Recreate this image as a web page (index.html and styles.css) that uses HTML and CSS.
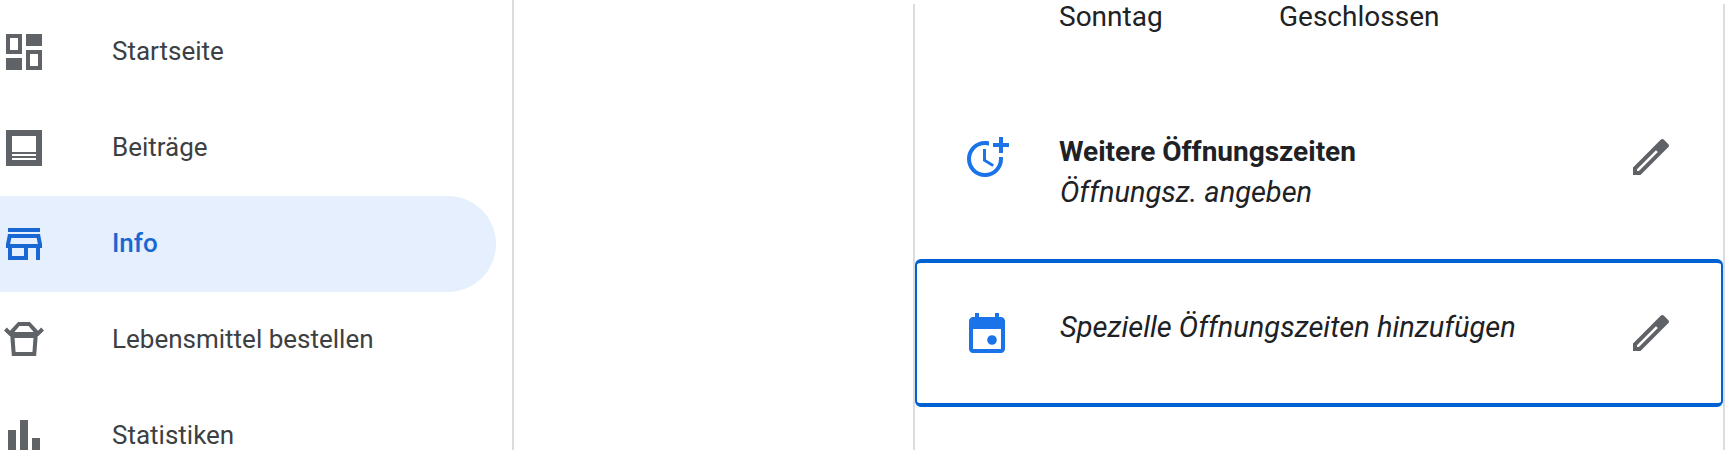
FILE: index.html
```html
<!DOCTYPE html>
<html lang="de">
<head>
<meta charset="utf-8">
<title>Info</title>
<link rel="stylesheet" href="styles.css">
</head>
<body>
<div class="page">
  <nav class="sidebar">
    <a class="nav-item">
      <svg class="icon" viewBox="0 0 24 24"><path fill-rule="evenodd" d="M3 3h8v10H3zM5 5v6h4V5zM13 3h8v6h-8zM13 11h8v10h-8zM15 13v6h4v-6zM3 15h8v6H3z"/></svg>
      <span>Startseite</span>
    </a>
    <a class="nav-item">
      <svg class="icon" viewBox="0 0 24 24"><path fill-rule="evenodd" d="M3 3h18v18H3zM6 6v8h12V6zM6 15v1h12v-1zM6 17v1h12v-1z"/></svg>
      <span>Beiträge</span>
    </a>
    <a class="nav-item nav-item-active">
      <svg class="icon" viewBox="0 0 24 24"><path d="M18.36 9l.6 3H5.04l.6-3h12.72M20 4H4v2h16V4zm0 3H4l-1 5v2h1v6h10v-6h4v6h2v-6h1v-2l-1-5zM6 18v-4h6v4H6z"/></svg>
      <span>Info</span>
    </a>
    <a class="nav-item">
      <svg class="icon" viewBox="0 0 24 24"><path d="M7.79 18l-.51-7h9.46l-.51 7H7.79zM9.72 5h4.56l2.53 3H7.19l2.53-3zM19 7.38L14.98 3H9.02L5 7.38 3.41 5.79 2 7.21 4.79 10h.36l.78 10h12.14l.78-10h.36L22 7.21l-1.41-1.42L19 7.38z"/></svg>
      <span>Lebensmittel bestellen</span>
    </a>
    <a class="nav-item">
      <svg class="icon" viewBox="0 0 24 24"><path d="M4 9h4v11H4zM10 4h4v16h-4zM16 13h4v7h-4z"/></svg>
      <span>Statistiken</span>
    </a>
  </nav>
  <div class="gutter"></div>
  <main class="panel">
    <div class="hours">
      <span class="day">Sonntag</span>
      <span>Geschlossen</span>
    </div>
    <section class="row row-more">
      <svg class="icon icon-accent" viewBox="0 0 24 24"><path d="M10 8v6l4.7 2.9.8-1.2-4-2.4V8H10zM17.92 12c.05.33.08.66.08 1 0 3.9-3.1 7-7 7s-7-3.1-7-7c0-3.9 3.1-7 7-7 .7 0 1.37.1 2 .29V4.23C12.36 4.08 11.69 4 11 4c-5 0-9 4-9 9 0 5 4 9 9 9s9-4 9-9c0-.34-.02-.67-.06-1h-3.02zM20 5V2h-2v3h-3v2h3v3h2V7h3V5h-3z"/></svg>
      <div class="row-text">
        <div class="row-title">Weitere Öffnungszeiten</div>
        <div class="row-note">Öffnungsz. angeben</div>
      </div>
      <svg class="icon" viewBox="0 0 24 24"><path fill-rule="evenodd" d="M17.66 3c-.25 0-.51.1-.7.29L3 17.25V21h3.75L20.71 7.04c.39-.39.39-1.02 0-1.41l-2.34-2.34c-.2-.2-.45-.29-.71-.29zM5 19v-.92l9.5-9.48.92.92L5.92 19z"/></svg>
    </section>
    <section class="row row-focus">
      <svg class="icon icon-accent" viewBox="0 -1 24 24"><path fill-rule="evenodd" d="M16 1v2H8V1H6v2H5C3.9 3 3.01 3.9 3.01 5L3 19c0 1.1.89 2 2 2h14c1.1 0 2-.9 2-2V5c0-1.1-.9-2-2-2h-1V1h-2zM5 9h14v10H5zM14.5 12.1a2.4 2.4 0 1 0 0 4.8 2.4 2.4 0 0 0 0-4.8z"/></svg>
      <div class="row-text row-text-raised">
        <div class="row-note">Spezielle Öffnungszeiten hinzufügen</div>
      </div>
      <svg class="icon" viewBox="0 0 24 24"><path fill-rule="evenodd" d="M17.66 3c-.25 0-.51.1-.7.29L3 17.25V21h3.75L20.71 7.04c.39-.39.39-1.02 0-1.41l-2.34-2.34c-.2-.2-.45-.29-.71-.29zM5 19v-.92l9.5-9.48.92.92L5.92 19z"/></svg>
    </section>
  </main>
</div>
</body>
</html>
```

FILE: styles.css
```css
* { box-sizing: border-box; }
html, body { margin: 0; background: #fff; }
body { font-family: Roboto, "Liberation Sans", sans-serif; color: #202124; height: 450px; overflow: hidden; }
.page { display: flex; width: 1725px; height: 450px; overflow: hidden; }
.sidebar { width: 514px; flex: none; height: 450px; padding-top: 4px; padding-right: 16px; border-right: 2px solid #dadce0; overflow: hidden; }
.nav-item { display: flex; align-items: center; gap: 64px; height: 96px; font-size: 26px; line-height: 48px; color: #3c4043; }
.nav-item span { padding-bottom: 2px; }
.nav-item-active { background: #e5effd; color: #1967d2; font-weight: 500; border-radius: 0 48px 48px 0; }
.nav-item-active .icon { fill: #1967d2; }
.icon { width: 48px; height: 48px; flex: none; fill: #5f6368; display: block; }
.icon-accent { fill: #1a73e8; }
.gutter { width: 399px; flex: none; }
.panel { flex: 1; margin-top: 4px; border-left: 2px solid #dadce0; border-right: 2px solid #dadce0; display: flex; flex-direction: column; }
.hours { display: flex; height: 26px; line-height: 26px; padding-left: 144px; font-size: 28px; color: #202124; }
.day { width: 220px; }
.row { display: flex; padding-left: 48px; padding-right: 48px; gap: 48px; }
.row-more { margin-top: 102px; align-items: flex-start; }
.row-more .icon { margin-top: 1px; }
.row-text { flex: 1; font-size: 28px; line-height: 40px; }
.row-text-raised { padding-bottom: 12px; }
.row-title { font-weight: 700; }
.row-note { font-size: 29px; font-style: italic; padding-left: 1px; }
.row-focus { margin-top: 47px; height: 148px; align-items: center; border: 2px solid #0061d0; border-top-width: 4px; border-bottom-width: 4px; border-radius: 6px; padding-left: 46px; padding-right: 46px; }
```
